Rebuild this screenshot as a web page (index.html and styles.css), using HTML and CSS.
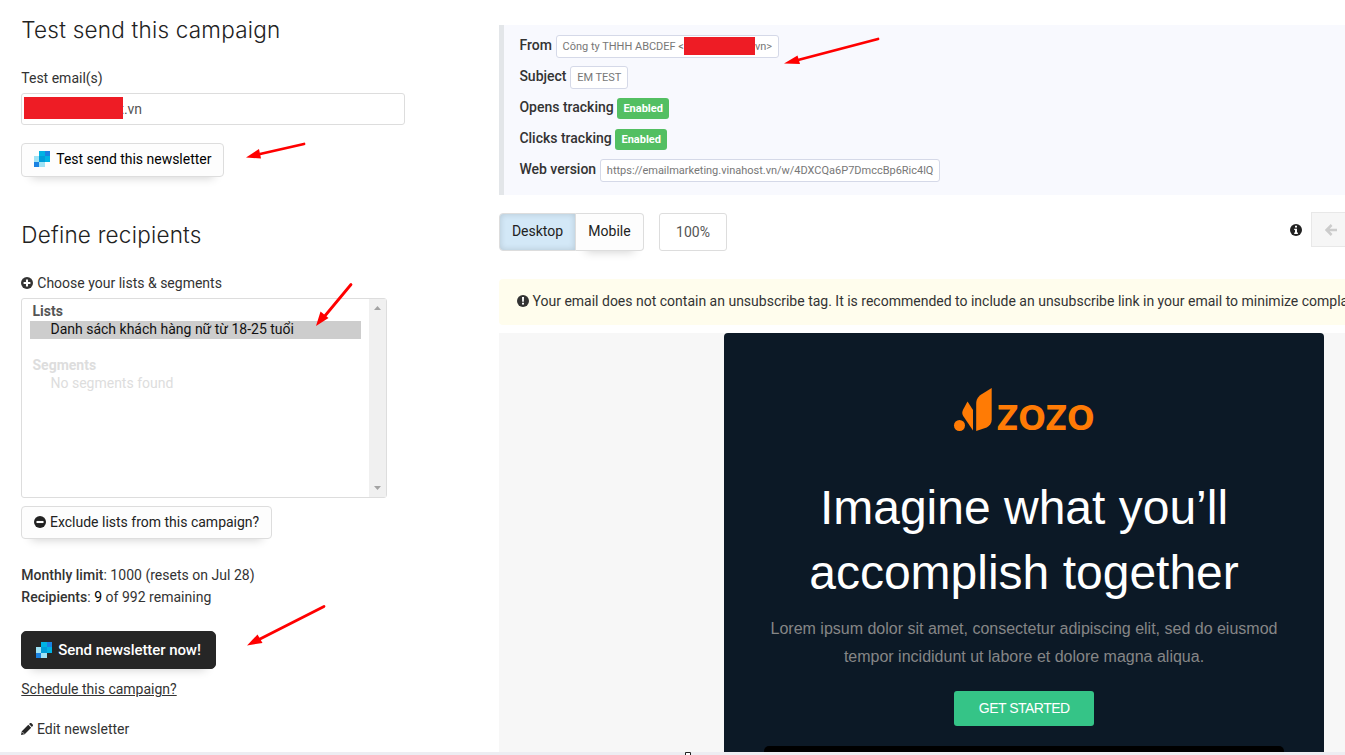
FILE: index.html
```html
<!DOCTYPE html>
<html lang="en">
<head>
<meta charset="utf-8">
<title>Test send this campaign</title>
<link rel="stylesheet" href="styles.css">
</head>
<body>
<svg class="defs" aria-hidden="true">
  <symbol id="ses" viewBox="0 0 16 16">
    <path fill="#009dd9" d="M5 5h6v6H5z"/>
    <path fill="#9fe3f5" d="M0 5h5v6H0zM5 11h6v5H5z"/>
    <path fill="#1a82e2" d="M0 11h5v5H2a2 2 0 0 1-2-2z"/>
    <path fill="#00b3e3" d="M5 0h6v5H5zM11 5h5v6h-5z"/>
    <path fill="#1a82e2" d="M11 0h3a2 2 0 0 1 2 2v3h-5z"/>
  </symbol>
</svg>
<div class="page">
  <main class="columns">
    <section class="send">
      <h2 class="title">Test send this campaign</h2>
      <label class="label label-email">Test email(s)</label>
      <div class="input"><span class="redact redact-email"></span><span class="input-text">t.vn</span></div>
      <button class="btn btn-test"><svg class="ses" viewBox="0 0 16 16"><use href="#ses"/></svg>Test send this newsletter</button>
      <h2 class="title title-define">Define recipients</h2>
      <div class="label label-lists"><svg class="icon" viewBox="0 0 12 12"><circle cx="6" cy="6" r="6" fill="#333"/><path d="M6 2.6v6.8M2.6 6h6.8" stroke="#fff" stroke-width="2.1"/></svg>Choose your lists &amp; segments</div>
      <div class="select">
        <div class="options">
          <div class="group">Lists</div>
          <div class="option option-on">Danh sách khách hàng nữ từ 18-25 tuổi</div>
          <div class="option">&nbsp;</div>
          <div class="group off">Segments</div>
          <div class="option off">No segments found</div>
        </div>
        <div class="scroll">
          <svg class="tri" viewBox="0 0 7 4"><path d="M3.5 0L7 4H0z" fill="#a3a3a3"/></svg>
          <svg class="tri" viewBox="0 0 7 4"><path d="M0 0h7L3.500 4z" fill="#a3a3a3"/></svg>
        </div>
      </div>
      <button class="btn btn-exclude"><svg class="icon" viewBox="0 0 12 12"><circle cx="6" cy="6" r="6" fill="#222"/><path d="M2.500 6h7" stroke="#fff" stroke-width="2.1"/></svg>Exclude lists from this campaign?</button>
      <div class="facts"><div><b>Monthly limit</b>: 1000 (resets on Jul 28)</div><div><b>Recipients</b>: <span class="count">9</span> of 992 remaining</div></div>
      <button class="btn btn-send"><svg class="ses" viewBox="0 0 16 16"><use href="#ses"/></svg>Send newsletter now!</button>
      <a class="schedule">Schedule this campaign?</a>
      <a class="edit"><svg class="icon" viewBox="0 0 12 12"><path fill="#262626" d="M0 12l.8-3.700L7.300 1.800l2.900 2.900-6.500 6.500zM8 1.100L9 .2c.5-.4 1-.3 1.500.1L11.700 1.500c.5.500.4 1 0 1.500l-.8.900z"/><path d="M1.300 9l1.800 1.800" stroke="#fff" stroke-width=".7"/></svg>Edit newsletter</a>
    </section>
    <section class="preview">
      <div class="info">
        <div class="row"><b>From</b><span class="tag">Công ty THHH ABCDEF &lt;<span class="redact redact-from"></span>vn&gt;</span></div>
        <div class="row"><b>Subject</b><span class="tag">EM TEST</span></div>
        <div class="row"><b>Opens tracking</b><span class="badge">Enabled</span></div>
        <div class="row"><b>Clicks tracking</b><span class="badge">Enabled</span></div>
        <div class="row"><b>Web version</b><span class="tag">https://emailmarketing.vinahost.vn/w/4DXCQa6P7DmccBp6Ric4lQ</span></div>
      </div>
      <div class="tools">
        <div class="tabs"><span class="tab tab-on">Desktop</span><span class="tab">Mobile</span></div>
        <div class="zoom">100%</div>
        <svg class="icon tip" viewBox="0 0 12 12"><circle cx="6" cy="6" r="6" fill="#222"/><path fill="#fff" d="M5 1.800h2v1.700H5zM4.200 4.700H7v3.800h.9V10H4.200V8.500H5V6h-.8z"/></svg>
        <div class="back"><svg class="arrow-icon" viewBox="0 0 12 12"><path d="M12 6H2M6.600 1L1.600 6l5 5" fill="none" stroke="#ccc" stroke-width="2.5"/></svg></div>
      </div>
      <div class="warning"><svg class="icon" viewBox="0 0 12 12"><circle cx="6" cy="6" r="6" fill="#333"/><path fill="#fff" d="M5 2h2l-.2 4.800H5.200zM5 7.800h2v1.800H5z"/></svg>Your email does not contain an unsubscribe tag. It is recommended to include an unsubscribe link in your email to minimize complaints</div>
      <div class="canvas">
        <article class="email">
          <svg class="logo" viewBox="0 0 142 46">
            <g fill="#ff7b05"><circle cx="6.500" cy="38.500" r="5.500"/><path d="M14.500 14.500l5.500 8.500v20.500L10.200 29c-1.500-2.500-1-4.500 0-6.500z"/><path d="M38.700 1v31.500c0 4-2 6-5 8L23.200 44V17c0-4 1-6.500 5-9.500z"/></g>
            <text class="logo-text" x="43.500" y="43" textLength="98" lengthAdjust="spacingAndGlyphs">zozo</text>
          </svg>
          <h1 class="hero">Imagine what you’ll<br>accomplish together</h1>
          <p class="lead">Lorem ipsum dolor sit amet, consectetur adipiscing elit, sed do eiusmod<br>tempor incididunt ut labore et dolore magna aliqua.</p>
          <span class="cta">GET STARTED</span>
          <div class="media"></div>
        </article>
      </div>
    </section>
  </main>
  <footer class="foot"></footer>
  <svg class="marks" viewBox="0 0 1345 755">
    <g stroke="#f00" stroke-width="2.800" stroke-linecap="round" fill="#f00">
      <path d="M304 144L260 154"/><path stroke="none" d="M246 157.500L259 149l2 9.500z"/>
      <path d="M351 284.500L324 317"/><path stroke="none" d="M316 326l4.500-14.500 8 6.500z"/>
      <path d="M324 606.500L259 639.500"/><path stroke="none" d="M247 645.500l10.500-11 5 8.500z"/>
      <path d="M878 39L798 60"/><path stroke="none" d="M784 63.500l13.500-8 2.500 8.500z"/>
    </g>
    <path d="M685.500 755v-2.500h5v2.500" fill="#fff" stroke="#222"/>
  </svg>
</div>
</body>
</html>
```
FILE: styles.css
```css
* { box-sizing: border-box; }
body { margin: 0; background: #fff; font: 14px/20px Roboto, "Liberation Sans", sans-serif; color: #333; overflow: hidden; }
.defs { display: none; }
.page { position: relative; width: 1345px; height: 755px; overflow: hidden; display: flex; flex-direction: column; }
.columns { flex: 1; min-height: 0; display: flex; overflow: hidden; }
.send { width: 478px; padding-left: 0.3px; margin-left: 21px; display: flex; flex-direction: column; align-items: flex-start; flex: none; }
.title { margin: 15px 0 0; font: 300 22.5px/30px Inter, sans-serif; color: #222; white-space: nowrap; letter-spacing: .22px; }
.label { display: flex; align-items: center; gap: 4px; }
.label-email { margin-top: 23px; }
.icon { width: 12px; height: 12px; flex: none; }
.input { margin-top: 5px; width: 384px; height: 32px; border: 1px solid #ddd; border-radius: 3px; display: flex; align-items: center; padding-left: 2px; color: #555; }
.redact { display: inline-block; background: #ee1c25; }
.redact-email { width: 99px; height: 22px; margin-top: -2px; position: relative; z-index: 1; }
.input-text { margin-left: -4px; }
.btn { font: 14px/20px Roboto, sans-serif; display: flex; align-items: center; border: 1px solid #ddd; border-radius: 4px; background: #fdfdfd; box-shadow: 0 11px 10px -10px rgba(0,0,0,.18); padding: 0 12px; white-space: nowrap; }
.btn-test { margin-top: 18px; height: 34px; width: 203px; gap: 6px; color: #000; padding-bottom: 2px; letter-spacing: -.02px; }
.ses { width: 16px; height: 16px; flex: none; shape-rendering: crispEdges; }
.title-define { margin-top: 43px; }
.label-lists { margin-top: 23px; }
.select { margin-top: 5px; width: 366px; height: 200px; border: 1px solid #ddd; border-radius: 3px; display: flex; }
.options { flex: 1; padding: 4px 8px; line-height: 18px; }
.group { font-weight: 700; padding-left: 2.2px; color: #555; line-height: 16px; padding-bottom: 2px; }
.option { padding-left: 20.2px; line-height: 16px; padding-bottom: 2px; }
.option-on { background: #cdcdcd; color: #111; }
.group.off, .option.off { color: #ddd; }
.scroll { width: 17px; background: #f0f0f0; display: flex; flex-direction: column; justify-content: space-between; align-items: center; padding: 7px 0; }
.tri { width: 7px; height: 4px; }
.btn-exclude { margin-top: 8px; height: 33px; width: 251px; gap: 3.700px; color: #222; padding-bottom: 1px; }
.facts { margin-top: 25px; line-height: 22px; letter-spacing: .02px; }
.facts b { font-weight: 500; }
.facts .count { color: #000; }
.btn-send { margin-top: 23px; height: 38px; width: 195px; padding: 0 14px; gap: 6px; background: #262626; border-color: #262626; color: #fff; font-size: 15px; font-weight: 500; border-radius: 5px; letter-spacing: -.06px; }
.schedule { margin-top: 10px; text-decoration: underline; }
.edit { margin-top: 20px; display: flex; align-items: center; gap: 3.700px; }
.preview { flex: none; width: 1000px; display: flex; flex-direction: column; }
.preview > * { flex: none; }
.info { margin-top: 25px; height: 170px; background: #f8f9fe; border-left: 5px solid #e3e6e9; padding: 6px 15px 0 15.400px; }
.row { height: 31px; display: flex; align-items: center; gap: 3.700px; }
.row b { font-weight: 500; margin-bottom: 4px; }
.tag { height: 23px; padding: 0 6px; border: 1px solid #d5d9e8; border-radius: 3px; background: #fff; color: #777; font-size: 11px; display: flex; align-items: center; letter-spacing: -.01px; }
.redact-from { width: 71px; height: 18px; margin-bottom: 1px; }
.badge { background: #53bf62; color: #fff; font-weight: 700; font-size: 11px; border-radius: 3px; height: 21px; padding: 0 6px; display: flex; align-items: center; }
.tools { margin-top: 17px; width: 846px; height: 39px; display: flex; align-items: center; }
.tabs { display: flex; height: 38px; }
.tab { border: 1px solid #ddd; border-left: 0; width: 68px; border-radius: 0 4px 4px 0; background: #fdfdfd; display: flex; justify-content: center; align-items: center; padding-bottom: 2px; color: #222; box-shadow: 0 11px 10px -10px rgba(0,0,0,.18); }
.tab-on { width: 77px; border-left: 1px solid #ddd; border-radius: 4px 0 0 4px; background: #d3e8f7; box-shadow: inset 0 0 6px rgba(0,0,0,.15); }
.zoom { margin-left: 15px; width: 68px; height: 38px; border: 1px solid #ddd; border-radius: 3px; display: flex; align-items: center; justify-content: center; color: #555; }
.tip { margin-left: auto; margin-right: 9.500px; margin-bottom: 4px; }
.back { width: 34px; height: 35px; margin-bottom: 4px; background: #f6f6f6; border: 1px solid #e8e8e8; border-right: 0; display: flex; align-items: center; padding-left: 13px; }
.arrow-icon { width: 12px; height: 12px; }
.warning { margin-top: 28px; height: 46px; background: #fffded; border-radius: 4px 0 0 4px; display: flex; align-items: center; gap: 3.500px; padding: 0 0 2px 18px; white-space: nowrap; }
.canvas { margin-top: 8px; height: 440px; background: #f7f7f7; padding-left: 225px; }
.email { width: 600px; height: 440px; background: #0c1926; border-radius: 4px 4px 0 0; display: flex; flex-direction: column; align-items: center; text-align: center; overflow: hidden; font-family: "Liberation Sans", Arial, sans-serif; }
.email > * { flex: none; }
.logo { width: 142px; height: 46px; margin-top: 54px; overflow: visible; }
.logo-text { font: 700 47px Lato, sans-serif; fill: #ff7b05; }
.hero { margin: 42px 0 0; font-size: 48px; line-height: 65px; font-weight: 400; color: #fff; white-space: nowrap; }
.lead { margin: 10px 0 0; font-size: 16px; line-height: 28px; color: #868686; white-space: nowrap; }
.cta { margin-top: 20px; width: 140px; height: 35px; line-height: 35px; background: #35c487; border-radius: 3px; color: #fff; letter-spacing: -.5px; padding-left: .5px; }
.media { margin-top: 20px; width: 520px; height: 60px; background: #000; border-radius: 5px; }
.foot { height: 3px; background: #ededf2; flex: none; }
.marks { position: absolute; left: 0; top: 0; width: 1345px; height: 755px; pointer-events: none; }
```
